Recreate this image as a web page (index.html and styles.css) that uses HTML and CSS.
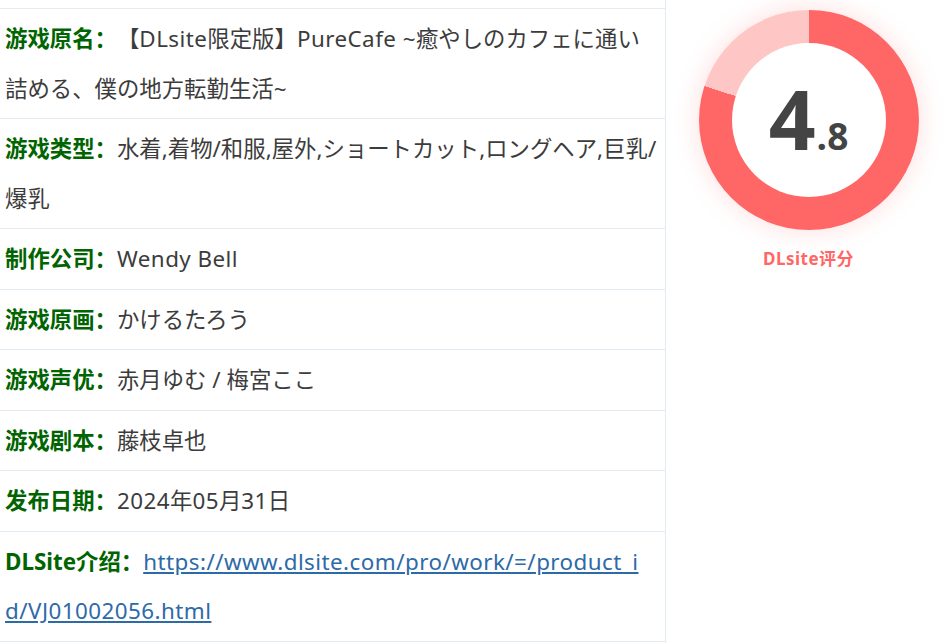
FILE: index.html
```html
<!DOCTYPE html>
<html lang="zh-CN">
<head>
<meta charset="utf-8">
<title>游戏信息</title>
<link rel="stylesheet" href="styles.css">
</head>
<body>
<div class="page">
  <div class="info">
    <div class="row"><b class="label">游戏原名：</b><span class="value">【<span class="latin">DLsite</span>限定版】<span class="latin">PureCafe ~</span>癒やしのカフェに通い詰める、僕の地方転勤生活~</span></div>
    <div class="row"><b class="label">游戏类型：</b><span class="value">水着,着物/和服,屋外,ショートカット,ロングヘア,巨乳/爆乳</span></div>
    <div class="row"><b class="label">制作公司：</b><span class="value latin">Wendy Bell</span></div>
    <div class="row"><b class="label">游戏原画：</b><span class="value">かけるたろう</span></div>
    <div class="row"><b class="label">游戏声优：</b><span class="value">赤月ゆむ / 梅宮ここ</span></div>
    <div class="row"><b class="label">游戏剧本：</b><span class="value">藤枝卓也</span></div>
    <div class="row"><b class="label">发布日期：</b><span class="value"><span class="latin">2024</span>年<span class="latin">05</span>月<span class="latin">31</span>日</span></div>
    <div class="row link-row"><b class="label">DLSite介绍：</b><a class="link latin" href="#">https://www.dlsite.com/pro/work/=/product_id/VJ01002056.html</a></div>
  </div>
  <div class="score">
    <div class="donut">
      <div class="donut-inner">
        <span class="big">4</span><span class="small">.8</span>
      </div>
    </div>
    <div class="score-label">DLsite评分</div>
  </div>
</div>
</body>
</html>
```

FILE: styles.css
```css
html, body {
  margin: 0;
  padding: 0;
  background: #fff;
}
body {
  font-family: "Noto Sans", "Noto Sans CJK SC", sans-serif;
  color: #3c3c3c;
}
.page {
  display: flex;
  width: 947px;
  height: 643px;
  overflow: hidden;
}
.info {
  width: 666px;
  flex: none;
  border-right: 1px solid #e4ecf3;
  padding-top: 8px;
  box-sizing: border-box;
  min-height: 643px;
}
.row {
  border-top: 1px solid #e4ecf3;
  padding: 5px 7px 5px 5px;
  font-size: 22.4px;
  line-height: 49.5px;
  word-break: break-all;
  text-spacing-trim: space-all;
}
.row:last-child {
  border-bottom: 1px solid #e4ecf3;
}
.link-row {
  padding-right: 20px;
}
.label {
  color: #006400;
  font-weight: bold;
}
.value {
  color: #3c3c3c;
}
.latin {
  letter-spacing: 0.45px;
}
.link {
  color: #2d6aa8;
  text-decoration: underline;
}
.score {
  flex: 1;
  display: flex;
  flex-direction: column;
  align-items: center;
  padding-top: 10px;
  padding-left: 4px;
}
.donut {
  width: 220px;
  height: 220px;
  border-radius: 50%;
  background: conic-gradient(#ff6666 0deg 288deg, #ffc6c6 288deg 360deg);
  box-shadow: 0 0 26px rgba(255, 102, 102, 0.22);
  display: flex;
  align-items: center;
  justify-content: center;
}
.donut-inner {
  width: 154px;
  height: 154px;
  border-radius: 50%;
  background: #fff;
  display: flex;
  align-items: baseline;
  justify-content: center;
  color: #444;
  font-family: "Open Sans", "Noto Sans", sans-serif;
  font-weight: bold;
  line-height: 150px;
}
.big {
  font-size: 82px;
}
.small {
  font-size: 37px;
  margin-left: 1px;
}
.score-label {
  margin-top: 15px;
  color: #ff6666;
  font-weight: bold;
  font-size: 17px;
  letter-spacing: 0.5px;
  font-family: "Noto Sans", "Noto Sans CJK SC", sans-serif;
}
```
